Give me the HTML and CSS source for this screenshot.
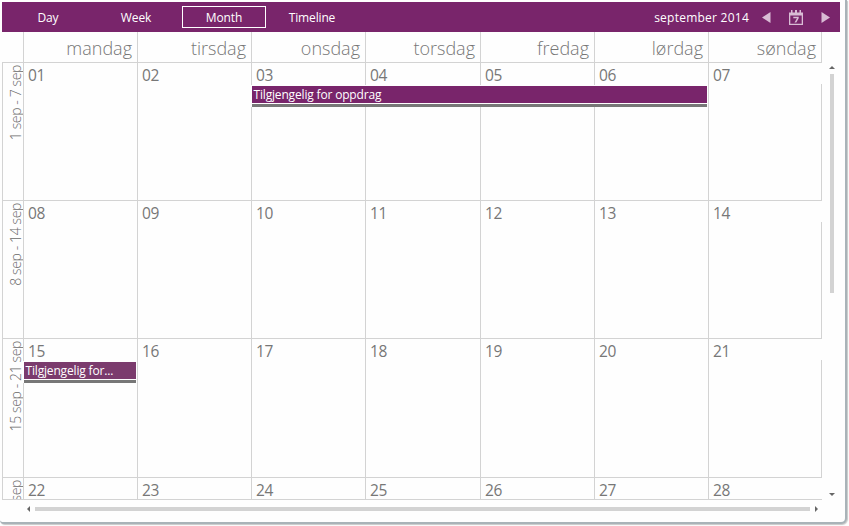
FILE: index.html
```html
<!DOCTYPE html>
<html lang="nb">
<head>
<meta charset="utf-8">
<title>Calendar</title>
<link rel="stylesheet" href="styles.css">
</head>
<body>
<div class="panel">
  <header class="toolbar">
    <nav class="views">
      <span class="view">Day</span>
      <span class="view">Week</span>
      <span class="view active">Month</span>
      <span class="view">Timeline</span>
    </nav>
    <div class="period">
      <span class="period-label">september 2014</span>
      <svg class="prev" width="9" height="11" viewBox="0 0 9 11"><path d="M8.500 0v11L0 5.500z"/></svg>
      <svg class="today" width="16" height="17" viewBox="0 0 16 17"><path fill-rule="evenodd" d="M1 3.500h2V1h1.500v2.500H7V1h2v2.500h2.500V1H13v2.500h2V16H1zM2.300 6.500v8.200h11.400V6.500z"/><path d="M5.300 7.700h5.400v1.600L8.300 13.500H6.500L9 9.300H5.300z"/></svg>
      <svg class="next" width="9" height="11" viewBox="0 0 9 11"><path d="M.5 0v11L9 5.500z"/></svg>
    </div>
  </header>
  <div class="body">
    <main class="calendar">
      <div class="row names"><div class="corner"></div><div>mandag</div><div>tirsdag</div><div>onsdag</div><div>torsdag</div><div>fredag</div><div>lørdag</div><div>søndag</div></div>
      <div class="row"><div class="week"><span>1 sep - 7 sep</span></div><div class="cell">01</div><div class="cell">02</div><div class="cell">03</div><div class="cell">04</div><div class="cell">05</div><div class="cell">06</div><div class="cell">07</div><div class="event long"><span>Tilgjengelig for oppdrag</span></div></div>
      <div class="row"><div class="week"><span>8 sep - 14 sep</span></div><div class="cell">08</div><div class="cell">09</div><div class="cell">10</div><div class="cell">11</div><div class="cell">12</div><div class="cell">13</div><div class="cell">14</div></div>
      <div class="row"><div class="week"><span>15 sep - 21 sep</span></div><div class="cell">15</div><div class="cell">16</div><div class="cell">17</div><div class="cell">18</div><div class="cell">19</div><div class="cell">20</div><div class="cell">21</div><div class="event short"><span>Tilgjengelig for...</span></div></div>
      <div class="row"><div class="week"><span>sep</span></div><div class="cell">22</div><div class="cell">23</div><div class="cell">24</div><div class="cell">25</div><div class="cell">26</div><div class="cell">27</div><div class="cell">28</div></div>
    </main>
    <div class="vbar"><i class="up"></i><b></b><i class="down"></i></div>
  </div>
  <div class="hbar"><i class="left"></i><b></b><i class="right"></i></div>
</div>
</body>
</html>
```
FILE: styles.css
```css
* { box-sizing: border-box; }
body {
  margin: 0;
  height: 526px;
  overflow: hidden;
  background: #fefefe;
  font-family: "Open Sans", "Noto Sans", sans-serif;
  color: #777;
}
.panel {
  width: 847px;
  height: 524px;
  padding: 2px 0 0 2px;
  background: #fefefe;
  border-right: 2px solid #a9b3b8;
  border-bottom: 2px solid #a9b3b8;
  border-radius: 0 0 6px 4px;
  box-shadow: 1px 1px 1px #c8c8c8;
}
.toolbar {
  display: flex;
  justify-content: space-between;
  width: 838px;
  height: 30px;
  background: #79256b;
  color: #fff;
  font-size: 12px;
}
.views, .period { display: flex; align-items: center; }
.views { padding-left: 4px; }
.view {
  width: 84px;
  height: 22px;
  margin-right: 4px;
  padding-top: 1px;
  line-height: 22px;
  letter-spacing: -.15px;
  text-align: center;
}
.view.active { border: 1px solid #fff; line-height: 20px; letter-spacing: -.1px; }
.period svg { fill: #d9bcd5; }
.period-label { margin-right: 13px; padding-top: 1px; letter-spacing: .24px; }
.prev { margin-right: 17px; }
.today { margin-right: 17px; }
.next { margin-right: 10px; }
.body { display: flex; }
.calendar {
  display: grid;
  grid-template-rows: 31px 138px 138px 139px 22px;
  width: 820px;
}
.row {
  display: grid;
  grid-template-columns: 22px 114px 114px 114px 115px 114px 114px 113px;
  grid-template-rows: 100%;
  min-height: 0;
}
.row > div { grid-row: 1; }
.row > :nth-child(1) { grid-column: 1; }
.row > :nth-child(2) { grid-column: 2; }
.row > :nth-child(3) { grid-column: 3; }
.row > :nth-child(4) { grid-column: 4; }
.row > :nth-child(5) { grid-column: 5; }
.row > :nth-child(6) { grid-column: 6; }
.row > :nth-child(7) { grid-column: 7; }
.row > :nth-child(8) { grid-column: 8; }
.names > div {
  border-right: 1px solid #d3d3d3;
  border-bottom: 1px solid #d3d3d3;
  padding-right: 5px;
  font-size: 18px;
  font-weight: 300;
  line-height: 32px;
  text-align: right;
}
.cell {
  padding-left: 4px;
  border-right: 1px solid #d3d3d3;
  border-bottom: 1px solid #d3d3d3;
  font-size: 15.5px;
  line-height: 24px;
  letter-spacing: -.3px;
  overflow: hidden;
}
.cell:nth-child(8) {
  border-right: 0;
  background: linear-gradient(#d3d3d3, #d3d3d3) 112px 21px / 1px 100% no-repeat;
}
.week {
  display: flex;
  border: 1px solid #d3d3d3;
  border-top: 0;
  padding-left: 4px;
  overflow: hidden;
  color: #6a6a6a;
  font-size: 14px;
  font-weight: 300;
  line-height: 18px;
  letter-spacing: -.38px;
}
.week span {
  writing-mode: vertical-rl;
  transform: rotate(180deg);
  white-space: nowrap;
  height: max-content;
  margin-top: 2px;
  flex: none;
}
.event {
  height: 22px;
  margin: 22px 2px 0 -1px;
  padding: 1px 0 0 1px;
  background: #fefefe;
  color: #fff;
  font-size: 12px;
  line-height: 18px;
  letter-spacing: -.17px;
}
.event span {
  display: block;
  height: 17px;
  padding-left: 1.5px;
  background: #79256b;
  white-space: nowrap;
}
.event::after { content: ""; display: block; height: 3px; margin-top: 1px; background: #777; }
.row > .event.long { grid-column: 4 / 8; }
.row > .event.short { grid-column: 2; }
.event.short span { background: #7b3b6d; }
.vbar {
  display: flex;
  flex-direction: column;
  align-items: center;
  width: 20px;
  padding-top: 34px;
}
.vbar b { width: 4px; height: 219px; margin-top: 5px; background: #d3d3d3; }
.vbar i, .hbar i { width: 0; height: 0; border: 3px solid transparent; }
.vbar .up { border-top: 0; border-bottom-color: #666; }
.vbar .down { border-bottom: 0; border-top-color: #666; margin-top: 200px; }
.hbar { display: flex; align-items: center; height: 18px; padding-left: 25px; }
.hbar b { width: 775px; height: 4px; margin: 0 5px; background: #d3d3d3; }
.hbar .left { border-left: 0; border-right-color: #666; }
.hbar .right { border-right: 0; border-left-color: #666; }
```
